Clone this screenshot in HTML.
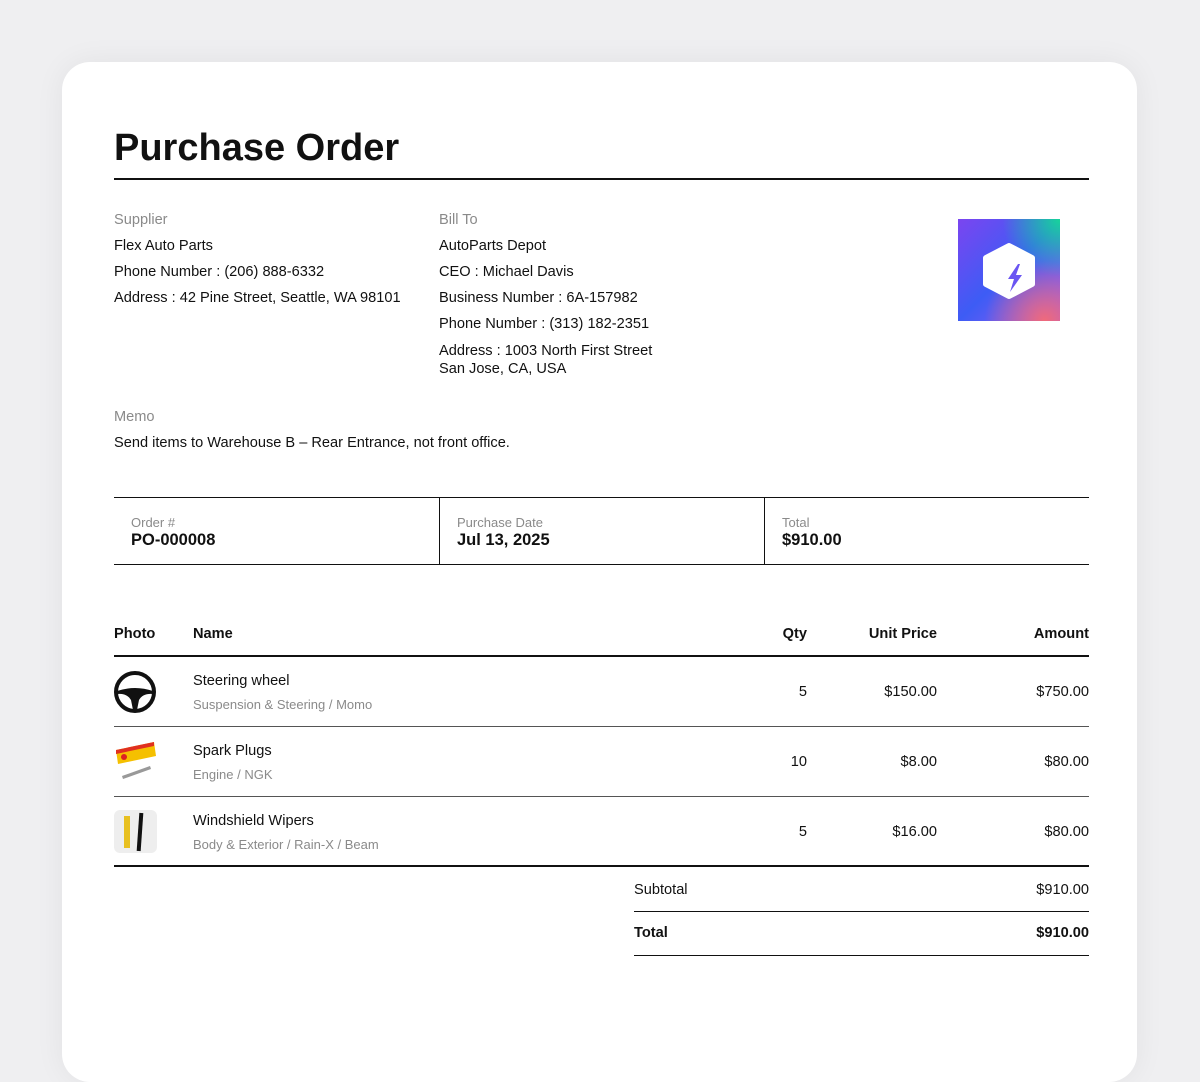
<!DOCTYPE html>
<html><head><style>
*{margin:0;padding:0;box-sizing:border-box}
body{width:1200px;height:1055px;background:#efeff1;font-family:"Liberation Sans",sans-serif;color:#111;position:relative;overflow:hidden}
.card{position:absolute;left:62px;top:62px;width:1075px;height:1020px;background:#fff;border-radius:28px;box-shadow:0 0 30px rgba(0,0,0,.06)}
.a{position:absolute;white-space:nowrap}
.t{font-size:14.6px}
.g{color:#8a8a8a;font-size:14.6px}
.s{color:#8a8a8a;font-size:13px}
.line{position:absolute;background:#111}
.b{font-weight:bold}
</style></head><body>
<div class="card"></div>
<div class="a b" style="left:114px;top:127px;font-size:38px">Purchase Order</div>
<div class="line" style="left:114px;top:178px;width:975px;height:2px"></div>

<div class="a g" style="left:114px;top:212px">Supplier</div>
<div class="a t" style="left:114px;top:238px">Flex Auto Parts</div>
<div class="a t" style="left:114px;top:264px">Phone Number : (206) 888-6332</div>
<div class="a t" style="left:114px;top:290px">Address : 42 Pine Street, Seattle, WA 98101</div>

<div class="a g" style="left:439px;top:212px">Bill To</div>
<div class="a t" style="left:439px;top:238px">AutoParts Depot</div>
<div class="a t" style="left:439px;top:264px">CEO : Michael Davis</div>
<div class="a t" style="left:439px;top:290px">Business Number : 6A-157982</div>
<div class="a t" style="left:439px;top:316px">Phone Number : (313) 182-2351</div>
<div class="a t" style="left:439px;top:342px;line-height:18px">Address : 1003 North First Street<br>San Jose, CA, USA</div>

<div class="a" style="left:958px;top:219px;width:102px;height:102px;background:radial-gradient(circle at 100% 0%,#17d49a 0%,transparent 40%),radial-gradient(circle at 85% 100%,#f06a7a 0%,transparent 45%),linear-gradient(135deg,#7b45f0,#3d5cf5 50%,#9b5cf0)">
<svg width="102" height="102" viewBox="0 0 102 102"><path d="M51 27 L74 39 L74 65 L51 77 L28 65 L28 39 Z" fill="#fff" stroke="#fff" stroke-width="6" stroke-linejoin="round"/><path d="M60 45 L50 60 L56 60 L52 73 L64 56 L58 56 L62 45 Z" fill="#6a55f2"/></svg></div>

<div class="a g" style="left:114px;top:409px">Memo</div>
<div class="a t" style="left:114px;top:435px">Send items to Warehouse B – Rear Entrance, not front office.</div>

<div class="line" style="left:114px;top:497px;width:975px;height:1px"></div>
<div class="line" style="left:114px;top:564px;width:975px;height:1px"></div>
<div class="line" style="left:439px;top:498px;width:1px;height:66px"></div>
<div class="line" style="left:764px;top:498px;width:1px;height:66px"></div>
<div class="a s" style="left:131px;top:515px">Order #</div>
<div class="a b" style="left:131px;top:531px;font-size:16.5px">PO-000008</div>
<div class="a s" style="left:457px;top:515px">Purchase Date</div>
<div class="a b" style="left:457px;top:531px;font-size:16.5px">Jul 13, 2025</div>
<div class="a s" style="left:782px;top:515px">Total</div>
<div class="a b" style="left:782px;top:531px;font-size:16.5px">$910.00</div>

<div class="a t b" style="left:114px;top:626px">Photo</div>
<div class="a t b" style="left:193px;top:626px">Name</div>
<div class="a t b" style="right:393px;top:626px">Qty</div>
<div class="a t b" style="right:263px;top:626px">Unit Price</div>
<div class="a t b" style="right:111px;top:626px">Amount</div>
<div class="line" style="left:114px;top:655px;width:975px;height:2px"></div>

<svg class="a" style="left:113px;top:670px" width="44" height="44" viewBox="0 0 44 44"><circle cx="22" cy="22" r="19" fill="none" stroke="#111" stroke-width="4"/><path d="M4 21 Q22 15 40 21 L40 24 Q30 23 26 30 L24 40 L20 40 L18 30 Q14 23 4 24Z" fill="#111"/></svg>
<div class="a t" style="left:193px;top:673px">Steering wheel</div>
<div class="a s" style="left:193px;top:697px">Suspension &amp; Steering / Momo</div>
<div class="a t" style="right:393px;top:684px">5</div>
<div class="a t" style="right:263px;top:684px">$150.00</div>
<div class="a t" style="right:111px;top:684px">$750.00</div>
<div class="line" style="left:114px;top:726px;width:975px;height:1px;background:#555"></div>

<svg class="a" style="left:114px;top:740px" width="44" height="40" viewBox="0 0 44 40"><path d="M2 10 L40 2 L42 16 L4 24Z" fill="#f5c000"/><path d="M2 10 L40 2 L40 6 L2 14Z" fill="#e03020"/><circle cx="10" cy="17" r="3" fill="#d22"/><path d="M8 36 L36 26 L37 29 L9 39Z" fill="#999"/></svg>
<div class="a t" style="left:193px;top:743px">Spark Plugs</div>
<div class="a s" style="left:193px;top:767px">Engine / NGK</div>
<div class="a t" style="right:393px;top:754px">10</div>
<div class="a t" style="right:263px;top:754px">$8.00</div>
<div class="a t" style="right:111px;top:754px">$80.00</div>
<div class="line" style="left:114px;top:796px;width:975px;height:1px;background:#555"></div>

<div class="a" style="left:114px;top:810px;width:43px;height:43px;background:#eee;border-radius:6px"><div style="position:absolute;left:10px;top:6px;width:6px;height:32px;background:#e8c020"></div><div style="position:absolute;left:24px;top:3px;width:4px;height:38px;background:#111;transform:rotate(4deg)"></div></div>
<div class="a t" style="left:193px;top:813px">Windshield Wipers</div>
<div class="a s" style="left:193px;top:837px">Body &amp; Exterior / Rain-X / Beam</div>
<div class="a t" style="right:393px;top:824px">5</div>
<div class="a t" style="right:263px;top:824px">$16.00</div>
<div class="a t" style="right:111px;top:824px">$80.00</div>
<div class="line" style="left:114px;top:865px;width:975px;height:2px"></div>

<div class="a t" style="left:634px;top:882px">Subtotal</div>
<div class="a t" style="right:111px;top:882px">$910.00</div>
<div class="line" style="left:634px;top:911px;width:455px;height:1px"></div>
<div class="a t b" style="left:634px;top:925px">Total</div>
<div class="a t b" style="right:111px;top:925px">$910.00</div>
<div class="line" style="left:634px;top:955px;width:455px;height:1px"></div>
</body></html>
